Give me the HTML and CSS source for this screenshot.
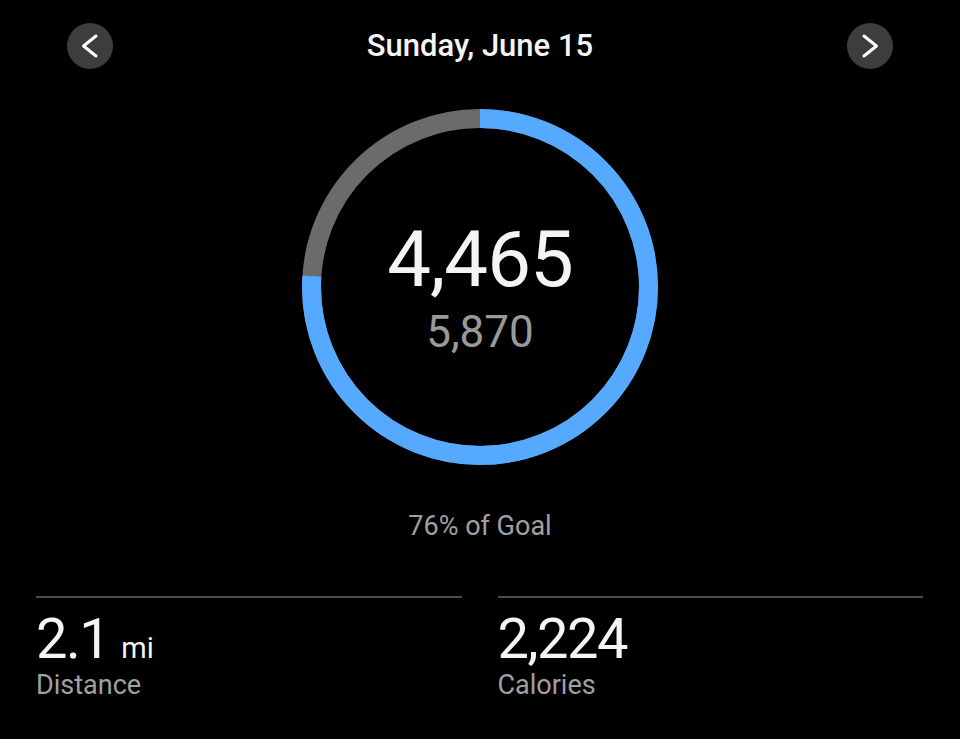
FILE: index.html
```html
<!DOCTYPE html>
<html lang="en">
<head>
    <meta charset="UTF-8">
    <meta name="viewport" content="width=device-width, initial-scale=1.0">
    <title>Steps - Sunday, June 15</title>
    <link rel="stylesheet" href="styles.css">
</head>
<body>
    <div class="screen">
        <!-- Day header -->
        <div class="day-header">
            <button class="nav-btn" aria-label="Previous day">
                <svg width="46" height="46" viewBox="0 0 46 46">
                    <polyline points="29,33 16.5,23 29,13" fill="none" stroke="#fff" stroke-width="3" stroke-linecap="round" stroke-linejoin="round"/>
                </svg>
            </button>
            <h1 class="day-title">Sunday, June 15</h1>
            <button class="nav-btn" aria-label="Next day">
                <svg width="46" height="46" viewBox="0 0 46 46">
                    <polyline points="17,13 29.5,23 17,33" fill="none" stroke="#fff" stroke-width="3" stroke-linecap="round" stroke-linejoin="round"/>
                </svg>
            </button>
        </div>

        <!-- Steps ring -->
        <div class="ring">
            <svg class="ring-chart" width="356" height="356" viewBox="0 0 356 356">
                <circle cx="178" cy="178" r="168.5" fill="none" stroke="#6b6b6b" stroke-width="19"/>
                <circle cx="178" cy="178" r="168.5" fill="none" stroke="#55aaff" stroke-width="19"
                        stroke-dasharray="804.6 1058.7" transform="rotate(-90 178 178)"/>
            </svg>
            <div class="ring-text">
                <div class="steps">4,465</div>
                <div class="goal">5,870</div>
            </div>
        </div>

        <p class="goal-pct">76% of Goal</p>

        <!-- Stats -->
        <div class="stats">
            <div class="stat">
                <div class="stat-value">2.1<span class="unit">mi</span></div>
                <div class="stat-label">Distance</div>
            </div>
            <div class="stat">
                <div class="stat-value">2,224</div>
                <div class="stat-label">Calories</div>
            </div>
        </div>
    </div>
</body>
</html>
```

FILE: styles.css
```css
body {
    margin: 0;
    background-color: #000;
    color: #f2f2f2;
    font-family: Roboto, "Noto Sans", sans-serif;
}
.screen {
    height: 739px;
    overflow: hidden;
}
.day-header {
    display: flex;
    align-items: center;
    justify-content: space-between;
    padding: 23px 67px 0 67px;
}
.nav-btn {
    width: 46px;
    height: 46px;
    padding: 0;
    border: none;
    border-radius: 50%;
    background-color: #3d3d3d;
    cursor: pointer;
}
.nav-btn svg {
    display: block;
}
.day-title {
    margin: 0;
    font-size: 31px;
    font-weight: 500;
    line-height: 46px;
    color: #f4f4f4;
}
.ring {
    display: grid;
    place-items: center;
    width: 356px;
    height: 356px;
    margin: 40px auto 0 auto;
}
.ring-chart,
.ring-text {
    grid-area: 1 / 1;
}
.ring-text {
    text-align: center;
    line-height: 1;
}
.steps {
    font-size: 78px;
    letter-spacing: -1px;
    color: #f4f4f4;
}
.goal {
    margin-top: 11px;
    font-size: 44px;
    color: #9a9a9a;
}
.goal-pct {
    margin: 48px 0 0 0;
    text-align: center;
    font-size: 27px;
    line-height: 1;
    color: #a0a0a0;
}
.stats {
    display: flex;
    gap: 36px;
    padding: 0 37px 0 36px;
    margin-top: 56px;
}
.stat {
    flex: 1;
    border-top: 2px solid #4a4a4a;
    padding-top: 13px;
}
.stat-value {
    font-size: 56px;
    letter-spacing: -1.5px;
    line-height: 1;
    color: #f4f4f4;
}
.unit {
    margin-left: 12px;
    font-size: 29px;
    letter-spacing: 0;
}
.stat-label {
    margin-top: 5px;
    font-size: 27px;
    line-height: 1;
    color: #a0a0a0;
}
```
